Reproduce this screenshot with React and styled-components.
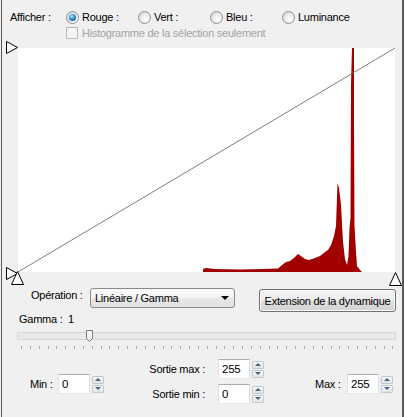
import React from "react";
import styled, { createGlobalStyle } from "styled-components";

const GlobalStyle = createGlobalStyle`
  html, body {
    margin: 0;
    padding: 0;
    background: #f0f0f0;
  }
  body {
    font-family: "Liberation Sans", Arial, sans-serif;
    font-size: 11px;
    letter-spacing: -0.25px;
    color: #000;
  }
`;

const Window = styled.div`
  box-sizing: border-box;
  width: 403px;
  height: 417px;
  margin-left: 1px;
  border-left: 1px solid #5a5a5a;
  border-right: 2px solid #5a5a5a;
  background: #f0f0f0;
  display: flex;
  flex-direction: column;
`;

const ShowRow = styled.div`
  display: flex;
  align-items: center;
  height: 14px;
  margin-top: 10px;
  padding-left: 8px;
`;

const RowLabel = styled.span`
  width: ${(p) => p.$width}px;
  white-space: nowrap;
  text-align: ${(p) => p.$align || "left"};
  line-height: 14px;
`;

const RadioGroup = styled.div`
  display: grid;
  grid-template-columns: repeat(4, 72px);
`;

const RadioItem = styled.label`
  display: flex;
  align-items: center;
  gap: 3px;
  white-space: nowrap;
`;

const RadioDot = styled.span`
  position: relative;
  box-sizing: border-box;
  width: 13px;
  height: 13px;
  border-radius: 50%;
  border: 1px solid #8e8f8f;
  background: radial-gradient(circle at 65% 70%, #ffffff 0%, #ececec 45%, #cdcdcd 100%);
  &::after {
    content: "";
    display: ${(p) => (p.$checked ? "block" : "none")};
    position: absolute;
    left: 2px;
    top: 2px;
    width: 7px;
    height: 7px;
    border-radius: 50%;
    background: radial-gradient(circle at 40% 35%, #b8ecff 0%, #2d8fd0 45%, #0b3a68 100%);
  }
`;

const CheckRow = styled.div`
  display: flex;
  align-items: center;
  gap: 4px;
  height: 12px;
  margin-top: 3px;
  padding-left: 64px;
  color: #a3a3a3;
`;

const CheckBox = styled.span`
  box-sizing: border-box;
  width: 12px;
  height: 12px;
  border: 1px solid #b8b8b8;
  background: #f4f4f4;
`;

const HistWrap = styled.div`
  position: relative;
  box-sizing: border-box;
  height: 244px;
  margin-top: 2px;
  padding: 7px 0 13px 16px;
`;

const Plot = styled.div`
  width: 377px;
  height: 224px;
  background: #ffffff;
  svg {
    display: block;
  }
`;

const Marker = styled.svg`
  position: absolute;
  left: ${(p) => p.$x}px;
  top: ${(p) => p.$y}px;
  overflow: visible;
`;

const OpRow = styled.div`
  display: flex;
  align-items: flex-start;
  height: 24px;
  margin-top: 3px;
  padding-left: 29px;
  line-height: 20px;
`;

const Select = styled.div`
  box-sizing: border-box;
  display: flex;
  align-items: center;
  justify-content: space-between;
  width: 145px;
  height: 20px;
  padding: 0 5px 0 4px;
  border: 1px solid #8a8a8a;
  border-radius: 3px;
  background: linear-gradient(#fafafa 0%, #f3f3f3 50%, #e8e8e8 51%, #e0e0e0 100%);
`;

const Caret = styled.span`
  width: 0;
  height: 0;
  border-left: 4px solid transparent;
  border-right: 4px solid transparent;
  border-top: 4px solid #000;
`;

const Button = styled.div`
  box-sizing: border-box;
  display: flex;
  align-items: center;
  justify-content: center;
  width: 137px;
  height: 23px;
  margin: 1px 0 0 24px;
  border: 1px solid #707070;
  border-radius: 3px;
  background: linear-gradient(#f4f4f4 0%, #ececec 50%, #dedede 51%, #d2d2d2 100%);
  box-shadow: inset 0 0 0 1px #fbfbfb;
`;

const GammaLabel = styled.div`
  height: 12px;
  line-height: 12px;
  margin-top: 1px;
  padding-left: 17px;
`;

const Slider = styled.div`
  position: relative;
  width: 379px;
  height: 12px;
  margin: 5px 0 0 15px;
`;

const Track = styled.div`
  box-sizing: border-box;
  margin-top: 2px;
  height: 8px;
  border: 1px solid #d6d6d6;
  border-radius: 1px;
  background: #e7eaea;
`;

const Thumb = styled.svg`
  position: absolute;
  left: ${(p) => p.$x}px;
  top: 0;
`;

const Ticks = styled.div`
  display: flex;
  justify-content: space-between;
  width: 373px;
  height: 4px;
  margin: 4px 0 0 19px;
`;

const Tick = styled.span`
  width: 1px;
  height: 3px;
  background: #a9a9a9;
`;

const Fields = styled.div`
  display: flex;
  align-items: flex-start;
  height: 46px;
  margin-top: 9px;
  padding-left: 28px;
`;

const FieldGroup = styled.div`
  display: flex;
  align-items: center;
  margin-top: ${(p) => p.$top || 0}px;
  margin-left: ${(p) => p.$left || 0}px;
`;

const Stack = styled.div`
  display: flex;
  flex-direction: column;
  gap: 5px;
  margin-left: ${(p) => p.$left}px;
`;

const NumInput = styled.div`
  box-sizing: border-box;
  width: 32px;
  height: 20px;
  padding: 0 3px;
  line-height: 18px;
  border: 1px solid #abadb3;
  border-left-color: #e2e3ea;
  border-right-color: #dbdfe6;
  border-bottom-color: #e3e9ef;
  background: #ffffff;
  font-size: 11.5px;
  margin-left: ${(p) => p.$gap || 0}px;
`;

const Spin = styled.div`
  display: flex;
  flex-direction: column;
  gap: 1px;
  margin-left: 2px;
`;

const SpinButton = styled.span`
  box-sizing: border-box;
  display: flex;
  align-items: center;
  justify-content: center;
  width: 12px;
  height: 8px;
  border: 1px solid #c3c8d0;
  border-radius: 1px;
  background: linear-gradient(#f8f8f8, #e4e4e4);
  &::after {
    content: "";
    border-left: 3px solid transparent;
    border-right: 3px solid transparent;
    ${(p) => (p.$up ? "border-bottom" : "border-top")}: 3px solid #4c6080;
  }
`;

const histPoints = [
  [203, 272], [203, 269], [206, 268], [215, 269], [240, 269.5], [262, 269],
  [278, 268.5], [282, 265], [286, 262], [290, 261], [294, 258], [298, 254],
  [301, 256], [305, 259], [309, 260], [315, 258], [320, 256], [325, 252],
  [328, 250], [331, 245], [334, 236], [336, 226], [337.5, 183], [339, 188],
  [341, 205], [342, 224], [343, 242], [345, 259], [347, 265], [348.5, 256],
  [349.5, 228], [350.5, 218], [351, 84], [352, 48], [354, 48], [354, 120],
  [354.5, 226], [356, 252], [357, 266], [360, 270], [362, 272],
];

const Spinner = () => (
  <Spin>
    <SpinButton $up />
    <SpinButton />
  </Spin>
);

const RightMarker = ({ x, y }) => (
  <Marker $x={x} $y={y} width="12" height="13">
    <polygon points="0.5,0.5 11.5,6.5 0.5,12.5" fill="#fff" stroke="#000" />
  </Marker>
);

const UpMarker = ({ x, y }) => (
  <Marker $x={x} $y={y} width="13" height="14">
    <polygon points="6.5,0.5 12.5,13.5 0.5,13.5" fill="#fff" stroke="#000" />
  </Marker>
);

const channels = [
  { label: "Rouge :", checked: true },
  { label: "Vert :" },
  { label: "Bleu :" },
  { label: "Luminance" },
];

const App = () => {
  const ticks = Array.from({ length: 43 });
  return (
    <Window>
      <GlobalStyle />
      <ShowRow>
        <RowLabel $width={56}>Afficher :</RowLabel>
        <RadioGroup>
          {channels.map((c) => (
            <RadioItem key={c.label}>
              <RadioDot $checked={c.checked} />
              {c.label}
            </RadioItem>
          ))}
        </RadioGroup>
      </ShowRow>
      <CheckRow>
        <CheckBox />
        Histogramme de la sélection seulement
      </CheckRow>
      <HistWrap>
        <Plot>
          <svg width="377" height="224" viewBox="18 48 377 224">
            <polygon
              points={histPoints.map((p) => p.join(",")).join(" ")}
              fill="#a00000"
            />
            <line x1="18" y1="272" x2="395" y2="48" stroke="#6e6e6e" strokeWidth="0.9" />
          </svg>
        </Plot>
        <RightMarker x={4} y={0} />
        <RightMarker x={4} y={226} />
        <UpMarker x={9} y={230} />
        <UpMarker x={387} y={231} />
      </HistWrap>
      <OpRow>
        <RowLabel $width={59}>Opération :</RowLabel>
        <Select>
          Linéaire / Gamma
          <Caret />
        </Select>
        <Button>Extension de la dynamique</Button>
      </OpRow>
      <GammaLabel>Gamma : &nbsp;1</GammaLabel>
      <Slider>
        <Track />
        <Thumb $x={69} width="7" height="12">
          <path
            d="M0.5,0.5 H6.5 V8.5 L3.5,11.5 L0.5,8.5 Z"
            fill="#f4f4f4"
            stroke="#7a7a7a"
          />
        </Thumb>
      </Slider>
      <Ticks>
        {ticks.map((_, i) => (
          <Tick key={i} />
        ))}
      </Ticks>
      <Fields>
        <FieldGroup $top={15}>
          <RowLabel $width={28}>Min :</RowLabel>
          <NumInput>0</NumInput>
          <Spinner />
        </FieldGroup>
        <Stack $left={36}>
          <FieldGroup>
            <RowLabel $width={65} $align="right">Sortie max :</RowLabel>
            <NumInput $gap={13}>255</NumInput>
            <Spinner />
          </FieldGroup>
          <FieldGroup>
            <RowLabel $width={65} $align="right">Sortie min :</RowLabel>
            <NumInput $gap={13}>0</NumInput>
            <Spinner />
          </FieldGroup>
        </Stack>
        <FieldGroup $top={15} $left={51}>
          <RowLabel $width={32}>Max :</RowLabel>
          <NumInput>255</NumInput>
          <Spinner />
        </FieldGroup>
      </Fields>
    </Window>
  );
};

export default App;
